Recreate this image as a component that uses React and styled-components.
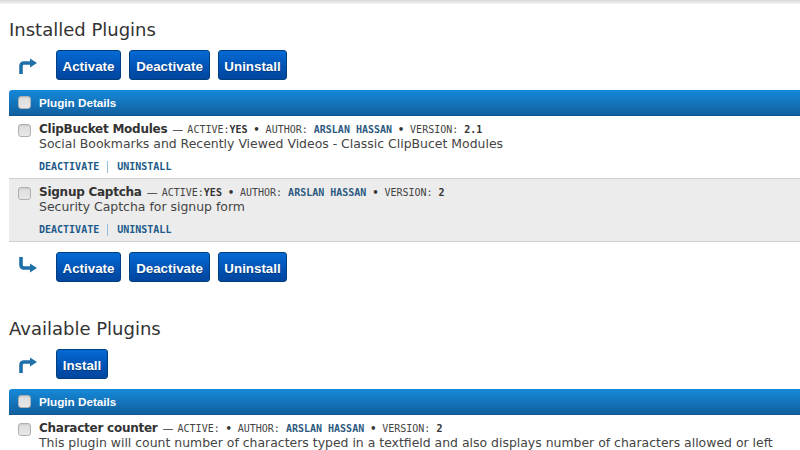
import React from "react";
import styled, { createGlobalStyle } from "styled-components";

const Global = createGlobalStyle`
  html, body { margin: 0; padding: 0; background: #fff; overflow: hidden; }
  body { width: 800px; height: 450px; font-family: "DejaVu Sans", sans-serif; }
`;
const Page = styled.div`
  height: 450px;
  overflow: hidden;
  padding-left: 9px;
  position: relative;
  display: flex;
  flex-direction: column;
  & > * { flex: none; }
`;
const TopShade = styled.div`
  position: absolute;
  left: 0; right: 0; top: 0;
  height: 4px;
  background: linear-gradient(#d8d8d8, #f6f6f6);
`;
const Heading = styled.h2`
  margin: ${(p) => p.$top}px 0 0;
  height: 22px;
  font: 400 18px/22px "DejaVu Sans", sans-serif;
  color: #333;
`;
const Toolbar = styled.div`
  display: flex;
  align-items: center;
  height: 30px;
  gap: 8px;
  margin: ${(p) => p.$top}px 0 0;
`;
const ArrowSlot = styled.div`
  width: 47px;
  height: 30px;
  margin-right: -8px;
  display: flex;
  align-items: center;
  padding-left: 10px;
  box-sizing: border-box;
`;
const ArrowSvg = styled.svg`
  display: block;
  flex: none;
  margin-top: ${(p) => p.$shift}px;
`;
const Button = styled.button`
  height: 30px;
  padding: 3px 0 0;
  width: ${(p) => p.$w}px;
  border: 1px solid #003f7d;
  border-radius: 3px;
  background: linear-gradient(#066ad4, #0050b0 65%, #02469f);
  color: #fff;
  font: 700 13.33px/25px "Liberation Sans", sans-serif;
  text-shadow: 0 1px 1px rgba(0,0,0,.3);
`;
const TableHead = styled.div`
  height: 26px;
  margin-top: 10px;
  display: flex;
  align-items: center;
  border-radius: 3px 0 0 0;
  background: linear-gradient(#1589da, #12609e);
  border-bottom: 1px solid #10578f;
  box-sizing: border-box;
  color: #fff;
  font: 700 11.7px "Liberation Sans", sans-serif;
  gap: 8px;
  padding: 0 0 0 9px;
`;
const Check = styled.span`
  display: block;
  width: 13px;
  height: 13px;
  box-sizing: border-box;
  flex: none;
  border: 1px solid #b0b0b0;
  border-radius: 3px;
  background: linear-gradient(#dcdcdc, #e8e8e8);
  box-shadow: inset 0 1px 1px #ccc;
  margin-top: ${(p) => p.$mt || 0}px;
`;
const Row = styled.div`
  display: flex;
  gap: 8px;
  padding: 6px 0 0 9px;
  height: ${(p) => p.$h}px;
  box-sizing: border-box;
  background: ${(p) => (p.$alt ? "#ececec" : "#fff")};
  border-bottom: ${(p) => (p.$flat ? "none" : "1px solid #cfcfcf")};
`;
const Body = styled.div`
  display: flex;
  flex-direction: column;
  min-width: 0;
`;
const TitleLine = styled.div`
  display: flex;
  align-items: baseline;
  height: 14px;
  line-height: 14px;
  white-space: pre;
`;
const Name = styled.strong`
  font: 700 12px/14px "DejaVu Sans", sans-serif;
  letter-spacing: -0.25px;
  color: #333;
`;
const Dash = styled.span`
  font: 400 11px/14px "DejaVu Sans", sans-serif;
  color: #333;
  margin: 0 4px 0 5px;
`;
const Meta = styled.span`
  font: 400 10px/14px "DejaVu Sans Mono", monospace;
  color: #444;
`;
const MetaValue = styled.span`
  font: 700 10px/14px "DejaVu Sans Mono", monospace;
  color: ${(p) => p.$c || "#2d5a80"};
`;
const Bullet = styled.span`
  font: 700 10px/14px "DejaVu Sans Mono", monospace;
  color: #333;
  margin: 0 6px;
`;
const Desc = styled.div`
  font: 400 12.45px/15px "DejaVu Sans", sans-serif;
  color: #444;
  white-space: nowrap;
`;
const Links = styled.div`
  display: flex;
  align-items: center;
  margin-top: 10px;
  font: 700 10px/12px "DejaVu Sans Mono", monospace;
  color: #1d5a8a;
`;
const Sep = styled.span`
  width: 1px;
  height: 12px;
  background: #8fbde0;
  margin: 0 9px 0 8px;
`;

const ArrowUp = () => (
  <ArrowSvg $shift={2} width="18" height="16" viewBox="0 0 18 16">
    <path d="M2 16V8Q2 5 5 5H12" fill="none" stroke="#1f6fa8" strokeWidth="3.6" />
    <path d="M11 0.5L18 5L11 9.5Z" fill="#1f6fa8" />
  </ArrowSvg>
);
const ArrowDown = () => (
  <ArrowSvg $shift={-5} width="18" height="16" viewBox="0 0 18 16">
    <path d="M2 0V8Q2 11 5 11H12" fill="none" stroke="#1f6fa8" strokeWidth="3.6" />
    <path d="M11 6.5L18 11L11 15.5Z" fill="#1f6fa8" />
  </ArrowSvg>
);

const Actions = ({ top, children }) => (
  <Toolbar $top={top}>
    <ArrowSlot>{children}</ArrowSlot>
    <Button $w={65}>Activate</Button>
    <Button $w={81}>Deactivate</Button>
    <Button $w={69}>Uninstall</Button>
  </Toolbar>
);

const Plugin = ({ name, active, version, desc, alt, links, h, flat }) => (
  <Row $alt={alt} $h={h} $flat={flat}>
    <Check $mt={2} />
    <Body>
      <TitleLine>
        <Name>{name}</Name>
        <Dash>—</Dash>
        <Meta>ACTIVE:</Meta>
        <MetaValue $c="#333">{active}</MetaValue>
        <Bullet>•</Bullet>
        <Meta>AUTHOR: </Meta>
        <MetaValue>ARSLAN HASSAN</MetaValue>
        <Bullet>•</Bullet>
        <Meta>VERSION: </Meta>
        <MetaValue $c="#333">{version}</MetaValue>
      </TitleLine>
      <Desc>{desc}</Desc>
      {links && (
        <Links>
          DEACTIVATE<Sep />UNINSTALL
        </Links>
      )}
    </Body>
  </Row>
);

export default function App() {
  return (
    <Page>
      <Global />
      <TopShade />
      <Heading $top={19}>Installed Plugins</Heading>
      <Actions top={9}><ArrowUp /></Actions>
      <TableHead>
        <Check />
        Plugin Details
      </TableHead>
      <Plugin h={63} links name="ClipBucket Modules" active="YES" version="2.1" desc="Social Bookmarks and Recently Viewed Videos - Classic ClipBucet Modules" />
      <Plugin h={63} links alt name="Signup Captcha" active="YES" version="2" desc="Security Captcha for signup form" />
      <Actions top={10}><ArrowDown /></Actions>
      <Heading $top={36}>Available Plugins</Heading>
      <Toolbar $top={9}>
        <ArrowSlot><ArrowUp /></ArrowSlot>
        <Button $w={52}>Install</Button>
      </Toolbar>
      <TableHead>
        <Check />
        Plugin Details
      </TableHead>
      <Plugin h={40} flat name="Character counter" active="" version="2" desc="This plugin will count number of characters typed in a textfield and also displays number of characters allowed or left" />
    </Page>
  );
}
